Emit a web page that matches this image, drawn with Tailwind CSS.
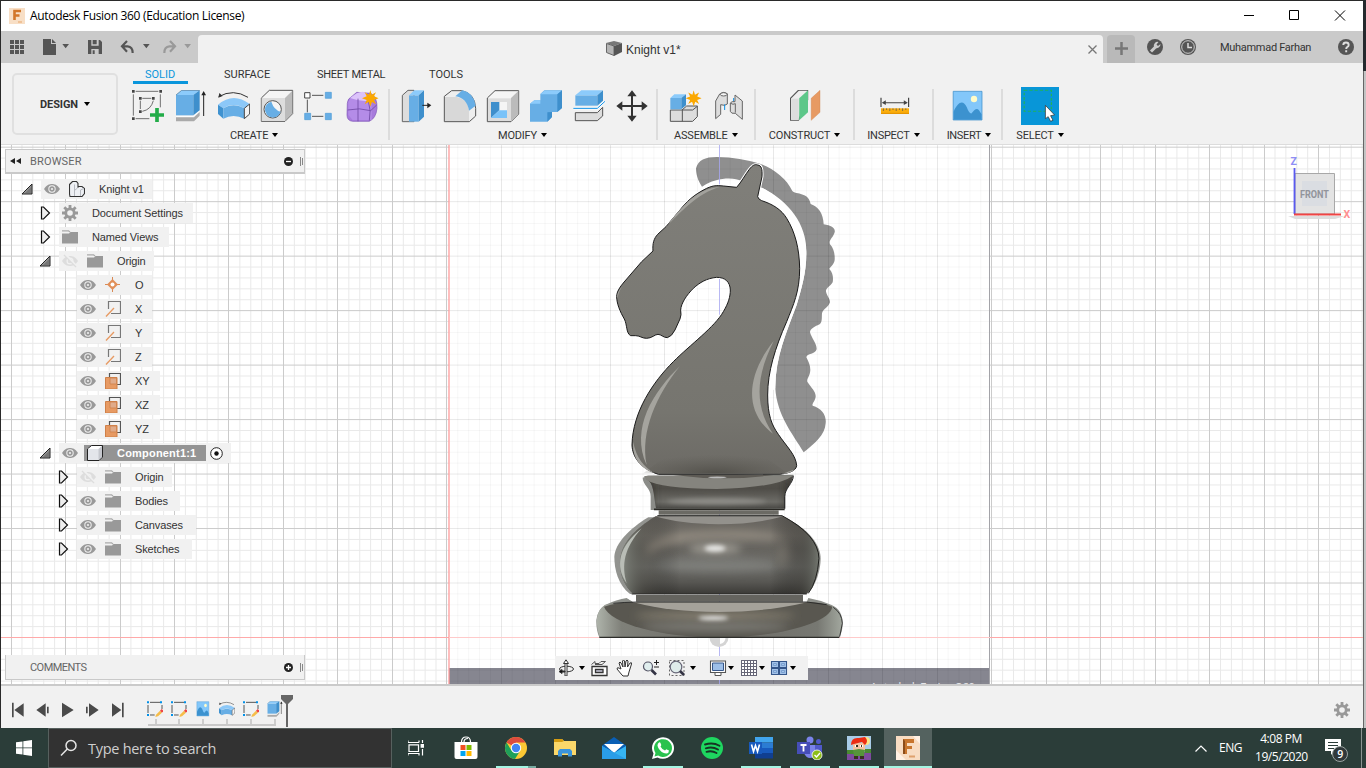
<!DOCTYPE html>
<html lang="en">
<head>
<meta charset="utf-8">
<title>Autodesk Fusion 360 (Education License)</title>
<script src="https://cdn.jsdelivr.net/npm/@tailwindcss/browser@4"></script>
</head>
<body class="h-[768px] w-[1366px] overflow-hidden bg-[#b9b9b9] font-['Liberation_Sans',sans-serif] text-[11px] text-[#333]">
<svg width="0" height="0" class="absolute">
  <defs>
    <symbol id="open" viewBox="0 0 12 12"><path d="M11 1V11H1Z" fill="#999" stroke="#222"/><path d="M10 4V10H4Z" fill="#777"/></symbol>
    <symbol id="shut" viewBox="0 0 12 14"><path d="M1.500 1H3.500L9.500 7L3.500 13H1.500Z" fill="#eee" stroke="#111" stroke-width="1.200"/></symbol>
    <symbol id="eye" viewBox="0 0 16 16"><path d="M0 8C3 3.500 5.500 3 8 3S13 3.500 16 8C13 12.500 10.500 13 8 13S3 12.500 0 8Z" fill="#999"/><circle cx="8" cy="8" r="3.700" fill="#f1f1f1"/><circle cx="8" cy="8" r="2.700" fill="#999"/><circle cx="8" cy="8" r="1.100" fill="#eee"/></symbol>
    <symbol id="noeye" viewBox="0 0 16 16"><path d="M0 8C3 3.500 5.500 3 8 3S13 3.500 16 8C13 12.500 10.500 13 8 13S3 12.500 0 8Z" fill="#ddd"/><circle cx="8" cy="8" r="3.500" fill="#f1f1f1"/><circle cx="8" cy="8" r="2.300" fill="#ddd"/><path d="M3 1L15 14" stroke="#f1f1f1" stroke-width="2.500"/><path d="M2 2L14 14" stroke="#ddd" stroke-width="1.300"/></symbol>
    <symbol id="folder" viewBox="0 0 16 16"><path d="M0 4.500H7L8.500 3H16V14.500H0Z" fill="#999"/><path d="M0 1.800H6.500L8 3" stroke="#aaa" fill="none" stroke-width="1.300"/></symbol>
    <symbol id="gear" viewBox="0 0 16 16"><path d="M8 0V16M0 8H16M2.300 2.300L13.700 13.700M13.700 2.300L2.300 13.700" stroke="#999" stroke-width="2.800"/><circle cx="8" cy="8" r="5.600" fill="#999"/><circle cx="8" cy="8" r="2.800" fill="#f1f1f1"/></symbol>
    <symbol id="axis" viewBox="0 0 16 16"><path d="M3.500 8V.5H15.500V12.500H6" fill="none" stroke="#777" stroke-width="1.200"/><path d="M1 15.500L9 7" stroke="#e79a63" stroke-width="1.300"/></symbol>
    <symbol id="plane" viewBox="0 0 16 16"><path d="M4.500 4V.5H15.500V11.500H12" fill="none" stroke="#555" stroke-width="1.200"/><path d="M.5 4.500H12V16H.5Z" fill="#e79a63" stroke="#cf8049"/><path d="M5 5H11.500V11H5Z" fill="#e0ab8a" stroke="#cf8049" stroke-width=".8"/></symbol>
    <symbol id="dn" viewBox="0 0 6 4"><path d="M0 0H6L3 4Z"/></symbol>
    <symbol id="tlsketch" viewBox="441 62 48 48"><path d="M450 66H480M444 74V98M486 74V86M450 104H464" stroke="#555" stroke-width="3"/><path d="M441 63h6v6h-6zM480 63h6v6h-6zM441 101h6v6h-6z" fill="#0090e8"/><path d="M468 103L480 91L486 97L474 108L466 110Z" fill="#f6bd49"/><path d="M480 91l5-5l5 5l-4 6z" fill="#e44"/></symbol>
    <symbol id="revolve" viewBox="654 270 96 96"><path d="M656 290Q700 265 744 292" fill="none" stroke="#333" stroke-width="3"/><path d="M655 293l3-14l10 9z" fill="#333"/><path d="M654 314Q700 275 749 312L733 325Q700 305 670 325Z" fill="#8cc8f8"/><path d="M654 314L670 325V356L654 342Z" fill="#3f92d0"/><path d="M670 325Q700 307 733 325V356Q700 340 670 356Z" fill="#67aee5"/><path d="M733 325L749 312V342L733 356Z" fill="#f4f4f4" stroke="#444" stroke-width="3"/></symbol>
    <symbol id="extr" viewBox="525 270 96 96"><path d="M528 352H582L599 336V347L582 364H528Z" fill="#aaa"/><path d="M528 349H580L598 333" fill="none" stroke="#fff" stroke-width="3"/><path d="M528 285H580V346H528Z" fill="#67aee5"/><path d="M528 285L545 271H599L580 285Z" fill="#8ccbfb"/><path d="M580 285L599 271V331L580 346Z" fill="#3e8fcc"/><path d="M528 285L545 271H599" stroke="#47708f" stroke-width="2" fill="none"/><path d="M611 348V278" stroke="#222" stroke-width="3"/><path d="M604 286L611 273L618 286Z" fill="#222"/></symbol>
    <symbol id="pic" viewBox="531 270 80 96"><path d="M534 274H606V360H534Z" fill="#83c7fa" stroke="#3c8fc9" stroke-width="2"/><ellipse cx="586" cy="297" rx="8" ry="10" fill="#fffbc8"/><path d="M535 335C548 300 560 302 568 322Q574 342 580 340C586 330 593 322 598 330L605 343V359H535Z" fill="#3c92cf"/></symbol>
    <symbol id="star" viewBox="0 0 50 50"><path d="M25 0L29 14L42 7L36 19L50 25L36 30L42 43L30 36L25 50L20 36L8 43L14 30L0 25L14 19L8 7L21 14Z" fill="#fba800"/></symbol>
  </defs>
</svg>

<div class="flex h-full flex-col border-t border-l border-[#2a2a2a]">
  <!-- title bar -->
  <header class="flex h-[30px] w-[1362px] shrink-0 items-center bg-white pl-2 font-['Open_Sans',sans-serif] text-black">
    <svg class="h-4 w-4" viewBox="0 0 16 16"><path fill="#f8dfc6" d="M0 0h16v16H0z"/><path d="M5.500 12V3H12M5.500 7.500H10.500" fill="none" stroke="#d2762a" stroke-width="2.600"/><path d="M9 14h4" stroke="#e7a56b"/></svg>
    <span class="ml-[5px] text-[12px] tracking-[-0.32px]">Autodesk Fusion 360 (Education License)</span>
    <svg class="mr-[17px] ml-auto h-3 w-[102px]" viewBox="0 0 102 12" fill="none" stroke="#000"><path d="M0 5.500H10M45.500 .5h9v9h-9zM91 .5l10 10M101 .5l-10 10"/></svg>
  </header>

  <!-- application bar -->
  <div class="flex h-8 w-[1362px] shrink-0 items-end bg-[#cacaca] font-[Roboto,sans-serif]">
    <div class="flex h-8 w-[197px] items-center pl-[9px]">
      <svg class="h-4 w-[182px]" viewBox="30 117 546 48" fill="#555"><path d="M30 120h12v12H30zM45 120h12v12H45zM60 120h12v12H60zM30 135h12v12H30zM45 135h12v12H45zM60 135h12v12H60zM30 150h12v12H30zM45 150h12v12H45zM60 150h12v12H60z"/><path d="M129 117H153V132H168V165H129ZM156 117L168 129H156Z"/><path d="M187 132H207L197 145ZM429 132H449L439 145Z"/><path d="M264 120H300L306 126V162H264Z"/><path d="M274 120H296V137H274ZM274 147H296V162H274Z" fill="#cacaca"/><path d="M278 120H290V133H278ZM278 151H284V162H278Z"/><path d="M381 123L366 139L381 155M368 139H383Q398 140 398 159" fill="none" stroke="#555" stroke-width="6.500"/><g fill="#999"><path d="M510 123L525 139L510 155M523 139H508Q493 140 493 159" fill="none" stroke="#999" stroke-width="6.500"/><path d="M553 132H573L563 145Z"/></g></svg>
    </div>
    <div class="flex h-7 w-[905px] items-center rounded-t bg-[#f1f1f1] pr-1">
      <div class="ml-[408px] flex items-center gap-1 font-['Liberation_Sans'] text-[12px]">
        <svg class="h-4 w-4" viewBox="0 0 16 16"><path d="M0 2L8 0L16 2L8 5Z" fill="#777"/><path d="M.5 2.500L8 5V14.500L.5 11.500Z" fill="#b5b5b5" stroke="#666"/><path d="M8 5L16 2V11L8 15Z" fill="#555"/></svg>
        <span class="pt-px">Knight v1*</span>
      </div>
      <svg class="mr-[2px] ml-auto h-[9px] w-[9px]" viewBox="0 0 9 9" stroke="#777" stroke-width="1.300"><path d="M.5.5l8 8M8.500.5l-8 8"/></svg>
    </div>
    <div class="ml-1 flex h-7 w-7 items-center justify-center rounded-t bg-[#b9b9b9]"><svg class="mb-[2px] h-[13px] w-[13px]" viewBox="0 0 13 13"><path d="M6.500 0V13M0 6.500H13" stroke="#777" stroke-width="2.500"/></svg></div>
    <div class="flex h-8 items-center">
      <svg class="ml-3 h-4 w-4" viewBox="0 0 16 16"><circle cx="8" cy="8" r="8" fill="#555"/><path d="M4 12.500L9 7.500" stroke="#ccc" stroke-width="3"/><path d="M11.500 3L9.500 5.500L11 7L13.500 5A3.800 3.800 0 0 1 7 8A3.800 3.800 0 0 1 11.500 3Z" fill="#ccc"/></svg>
      <svg class="ml-[17px] h-4 w-4" viewBox="0 0 16 16"><circle cx="8" cy="8" r="8" fill="#555"/><circle cx="8" cy="8" r="6.300" fill="none" stroke="#ccc"/><path d="M8 4V8.500H12" stroke="#ddd" stroke-width="1.500" fill="none"/></svg>
      <span class="ml-6 w-[118px] pt-[2px] tracking-[-0.3px] whitespace-nowrap">Muhammad Farhan</span>
      <svg class="h-4 w-4" viewBox="0 0 16 16"><circle cx="8" cy="8" r="8" fill="#555"/><path d="M5.300 6Q5.300 3.500 8 3.500T10.700 6Q10.700 7.300 9 8.300Q8.200 9 8.200 10M8.200 11.300V13.200" fill="none" stroke="#ddd" stroke-width="1.900"/></svg>
    </div>
  </div>

  <!-- ribbon -->
  <div class="flex h-[82px] w-[1362px] shrink-0 border-b border-[#dcdcdc] bg-[#f1f1f1] font-[Roboto,sans-serif]">
    <div class="mt-[10px] ml-[11px] flex h-[62px] w-[106px] items-center justify-center gap-[6px] rounded-[5px] border-2 border-[#e0e0e0] pt-[2px] text-[11px] font-bold tracking-[-0.1px]">DESIGN <svg class="mb-[2px] h-1 w-1.5"><use href="#dn"/></svg></div>
    <div class="flex flex-col">
      <nav class="flex h-[23px] pl-[15px]">
        <div class="flex h-[21px] w-[55px] justify-center border-b-[3px] border-[#0a96dc] pt-[5px] pr-px leading-[14px] text-[#0a96dc]">SOLID</div>
        <div class="ml-9 w-[46px] pt-1">SURFACE</div>
        <div class="ml-[47px] w-[68px] pt-1 tracking-[-0.28px] whitespace-nowrap">SHEET METAL</div>
        <div class="ml-11 pt-1">TOOLS</div>
      </nav>
      <div class="flex h-[54px] pt-[3px]">
        <section class="flex h-[51px] w-[272px] flex-col border-r-2 border-[#dcdcdc] pl-[14px]">
          <div class="flex gap-[11px] pt-px">
            <svg class="h-8 w-8 overflow-visible" viewBox="396 270 96 96"><path d="M407 274H475M400 283V347M481 283V322M407 356H448M427 295H454M421 302V327M460 302Q453 329 427 334" fill="none" stroke="#555" stroke-width="2.500"/><path d="M396 270h8v8h-8zM478 270h8v8h-8zM396 352h8v8h-8zM417 291h8v8h-8zM456 291h8v8h-8zM417 331h8v8h-8z" fill="#444"/><path d="M471 324V366M450 345H492" stroke="#22ac48" stroke-width="11"/></svg>
            <svg class="h-8 w-8"><use href="#extr"/></svg>
            <svg class="h-8 w-8"><use href="#revolve"/></svg>
            <svg class="h-8 w-8 overflow-visible" viewBox="783 270 96 96"><path d="M784 294L808 271H878V341L855 364H784Z" fill="#f5f5f5" stroke="#555" stroke-width="3"/><path d="M785 294H855V363H785Z" fill="#ddd"/><path d="M855 294L877 272V340L855 363Z" fill="#bbb"/><circle cx="818" cy="328" r="26" fill="#f5f5f5" stroke="#555" stroke-width="3"/><path d="M814 305Q822 330 842 335A24 24 0 1 1 814 305Z" fill="#67aee5"/></svg>
            <svg class="h-8 w-8" viewBox="912 270 96 96"><path d="M936 286H970M936 349H970M922 299V337" stroke="#555" stroke-width="3"/><path d="M914 278h16v16h-16z" fill="#fff" stroke="#444" stroke-width="3"/><path d="M976 277h18v18h-18zM914 340h18v19h-18zM976 340h18v19h-18z" fill="#67aee5" stroke="#4d9bd6" stroke-width="2"/></svg>
            <svg class="h-8 w-8 overflow-visible" viewBox="1041 270 96 96"><path d="M1042 310Q1042 296 1057 288L1070 277L1112 280Q1132 290 1131 325Q1128 355 1108 364H1058Q1041 362 1041 345Z" fill="#a77bdc" stroke="#7e54b8" stroke-width="2"/><path d="M1054 290Q1085 303 1115 284V360H1058L1045 345V305Z" fill="#b48ce8"/><path d="M1070 280Q1090 270 1100 280L1105 302Q1080 305 1050 294Z" fill="#dcc3fa"/><path d="M1043 330Q1078 322 1112 332L1130 315M1074 296V364M1105 302Q1114 332 1108 362" stroke="#6f48a5" stroke-width="2.500" fill="none"/><use href="#star" x="1086" y="270" width="50" height="50"/></svg>
          </div>
          <div class="mt-[6px] ml-[98px] flex items-center gap-1 tracking-[-0.2px]">CREATE <svg class="mb-[2px] h-1 w-1.5"><use href="#dn"/></svg></div>
        </section>
        <section class="flex h-[51px] w-[268px] flex-col border-r-2 border-[#dcdcdc] pl-3">
          <div class="flex gap-[11px] pt-px">
            <svg class="h-8 w-8 overflow-visible" viewBox="36 180 96 96"><path d="M37 196L54 181H72V275H37Z" fill="#ddd" stroke="#666" stroke-width="3"/><path d="M57 196H86V275H57Z" fill="#67aee5"/><path d="M57 196L73 181H101L86 196Z" fill="#8ccbfb"/><path d="M86 196L102 181V260L86 275Z" fill="#3e8fcc"/><path d="M97 226H116" stroke="#222" stroke-width="3"/><path d="M112 218L124 226L112 235Z" fill="#222"/></svg>
            <svg class="h-8 w-8 overflow-visible" viewBox="165 180 96 96"><path d="M163 199L185 182H215Q255 190 257 235V258L238 275H163Z" fill="#eee" stroke="#555" stroke-width="3"/><path d="M165 201H200Q235 208 237 242V273H165Z" fill="#d8d8d8"/><path d="M196 199L217 181Q250 187 257 227L237 242Q230 203 196 199Z" fill="#67aee5"/></svg>
            <svg class="h-8 w-8 overflow-visible" viewBox="294 180 96 96"><path d="M292 204L315 182H386V252L363 275H292Z" fill="#f5f5f5" stroke="#555" stroke-width="3"/><path d="M294 205H363V273H294Z" fill="#ddd"/><path d="M363 204L385 183V252L363 273Z" fill="#bbb"/><path d="M303 216H351V264H303Z" fill="#f5f5f5"/><path d="M303 216H328V241L303 264Z" fill="#3e8fcc"/><path d="M303 264L328 241H351V264Z" fill="#79c2f8"/></svg>
            <svg class="h-8 w-8 overflow-visible" viewBox="423 180 96 96"><path d="M420 221L433 211H451V192L463 181H516V234L502 246H486V261L472 275H420Z" fill="#67aee5"/><path d="M451 193L463 182H516L502 193ZM420 221L433 211H451V221Z" fill="#8ccbfb"/><path d="M502 193L516 181V234L502 246ZM472 247L486 246V261L472 275Z" fill="#3e8fcc"/></svg>
            <svg class="h-8 w-8 overflow-visible" viewBox="552 180 96 96"><path d="M556 248H622L638 232V258L622 272H556Z" fill="#ddd" stroke="#555" stroke-width="3"/><path d="M556 196H622V227H556Z" fill="#67aee5"/><path d="M556 196L574 181H638L622 196Z" fill="#8ccbfb"/><path d="M622 196L639 181V212L622 227Z" fill="#3e8fcc"/><path d="M550 235H622L645 214" fill="none" stroke="#fff" stroke-width="7"/><path d="M550 235H622L645 214" fill="none" stroke="#0a8ee5" stroke-width="3"/></svg>
            <svg class="h-8 w-8 overflow-visible" viewBox="681 180 96 96" fill="#333"><path d="M726 190V266M690 228H762" stroke="#333" stroke-width="6"/><path d="M712 199L726 181L740 199ZM712 257L726 275L740 257ZM697 214L679 228L697 242ZM755 214L773 228L755 242Z"/></svg>
          </div>
          <div class="mt-[6px] ml-[96px] flex items-center gap-1 tracking-[-0.2px]">MODIFY <svg class="mb-[2px] h-1 w-1.5"><use href="#dn"/></svg></div>
        </section>
        <section class="flex h-[51px] w-[98px] flex-col border-r-2 border-[#dcdcdc] pl-3">
          <div class="flex gap-[11px] pt-px">
            <svg class="h-8 w-8 overflow-visible" viewBox="840 180 96 96"><path d="M841 240H876L890 228H922V260L908 274H841Z" fill="#ddd" stroke="#555" stroke-width="3"/><path d="M877 240V274M877 240H908L922 229" stroke="#555" stroke-width="3" fill="none"/><path d="M841 204H874V238H841Z" fill="#67aee5"/><path d="M841 204L853 193H888L874 204Z" fill="#8ccbfb"/><path d="M874 204L888 193V226L874 238Z" fill="#3e8fcc"/><use href="#star" x="887" y="181" width="48" height="48"/></svg>
            <svg class="h-8 w-8 overflow-visible" viewBox="969 180 96 96" stroke="#666" stroke-width="3"><path d="M977 213L989 192Q1000 183 1012 191V222Q1005 229 992 224V253L977 266Z" fill="#ddd"/><ellipse cx="1001" cy="193" rx="10" ry="5" fill="#f5f5f5"/><path d="M1004 223V240M1031 204V222" stroke="#0a8ee5"/><path d="M1035 195L1057 213V268L1036 250Q1023 252 1021 244V219Q1025 213 1035 215Z" fill="#ddd"/><path d="M1022 220Q1029 225 1036 221V248" fill="none"/></svg>
          </div>
          <div class="mt-[6px] ml-1 flex items-center gap-1 tracking-[-0.2px]">ASSEMBLE <svg class="mb-[2px] h-1 w-1.5"><use href="#dn"/></svg></div>
        </section>
        <section class="flex h-[51px] w-[99px] flex-col items-center border-r-2 border-[#dcdcdc]">
          <svg class="mt-px ml-[3px] h-8 w-8 shrink-0" viewBox="125 270 80 96" preserveAspectRatio="none"><path d="M126 295L146 271H169V300L146 361H126Z" fill="#eee" stroke="#555" stroke-width="3"/><path d="M128 296H147V360H128Z" fill="#ddd"/><path d="M148 295L170 271V337L148 361Z" fill="#5dc789"/><path d="M178 295L200 271V337L178 361Z" fill="#e79a63" stroke="#d18048"/></svg>
          <div class="mt-[6px] flex items-center gap-1 tracking-[-0.2px]">CONSTRUCT <svg class="mb-[2px] h-1 w-1.5"><use href="#dn"/></svg></div>
        </section>
        <section class="flex h-[51px] w-[79px] flex-col items-center border-r-2 border-[#dcdcdc]">
          <svg class="mt-px ml-[2px] h-8 w-8 shrink-0" viewBox="346 270 80 96" preserveAspectRatio="none"><path d="M351 293V321M420 293V321M358 308H414" stroke="#444" stroke-width="3"/><path d="M353 308l10-7v14zM418 308l-10-7v14z" fill="#444"/><path d="M351 325H421V342H351Z" fill="#fbad0b"/><path d="M351 340H421" stroke="#e19100" stroke-width="3"/><path d="M357 325v8M365 325v5M373 325v8M381 325v5M389 325v8M397 325v5M405 325v8M413 325v5" stroke="#555" stroke-width="2"/></svg>
          <div class="mt-[6px] flex items-center gap-1 tracking-[-0.25px]">INSPECT <svg class="mb-[2px] h-1 w-1.5"><use href="#dn"/></svg></div>
        </section>
        <section class="flex h-[51px] w-[69px] flex-col items-center border-r-2 border-[#dcdcdc]">
          <svg class="mt-px h-8 w-8 shrink-0" viewBox="531 270 80 96" preserveAspectRatio="none"><path d="M534 274H606V360H534Z" fill="#83c7fa" stroke="#3c8fc9" stroke-width="2"/><ellipse cx="586" cy="297" rx="8" ry="10" fill="#fffbc8"/><path d="M535 335C548 300 560 302 568 322Q574 342 580 340C586 330 593 322 598 330L605 343V359H535Z" fill="#3c92cf"/></svg>
          <div class="mt-[6px] ml-[3px] flex items-center gap-1 tracking-[-0.3px]">INSERT <svg class="mb-[2px] h-1 w-1.5"><use href="#dn"/></svg></div>
        </section>
        <section class="flex h-[51px] w-[74px] flex-col items-center">
          <svg class="-mt-[2px] h-[38px] w-[38px] shrink-0" viewBox="704 261 95 114" preserveAspectRatio="none"><path d="M704 261H799V375H704Z" fill="#0896d8"/><path d="M712 271H780V334H712Z" fill="none" stroke="#21b35a" stroke-width="3" stroke-dasharray="8 5"/><path d="M765 316V356L772 350L778 364L784 361L778 347L788 345Z" fill="#fff" stroke="#333" stroke-width="2"/></svg>
          <div class="mt-[3px] flex items-center gap-1 tracking-[-0.2px]">SELECT <svg class="mb-[2px] h-1 w-1.5"><use href="#dn"/></svg></div>
        </section>
      </div>
    </div>
  </div>

  <!-- modelling viewport -->
  <main class="relative h-[539px] w-[1362px] shrink-0 overflow-hidden bg-white">
    <svg class="absolute top-0 -left-px h-[539px] w-[1363px]" viewBox="0 145 1363 539">
      <defs>
        <clipPath id="sheet"><path d="M449 145H990V684H449Z"/></clipPath>
        <linearGradient id="horse" x1="0" y1="0" x2="0" y2="1"><stop offset="0" stop-color="#807f7a"/><stop offset=".8" stop-color="#76756f"/><stop offset="1" stop-color="#6c6a65"/></linearGradient>
        <radialGradient id="shade" cx=".5" cy="1" r=".6"><stop offset="0" stop-color="#4c4a44" stop-opacity=".8"/><stop offset="1" stop-color="#5b5952" stop-opacity="0"/></radialGradient>
        <linearGradient id="ball" x1="0" y1="0" x2="0" y2="1"><stop offset="0" stop-color="#66635e"/><stop offset=".25" stop-color="#706d67"/><stop offset=".42" stop-color="#66645f"/><stop offset=".65" stop-color="#70706c"/><stop offset=".85" stop-color="#575652"/><stop offset="1" stop-color="#3b3a37"/></linearGradient>
        <linearGradient id="edge" x1="0" y1="0" x2="1" y2="0"><stop offset="0" stop-color="#858a82"/><stop offset=".13" stop-color="#474640" stop-opacity=".35"/><stop offset=".3" stop-color="#000" stop-opacity="0"/><stop offset=".75" stop-color="#000" stop-opacity="0"/><stop offset=".9" stop-color="#34332f" stop-opacity=".4"/><stop offset="1" stop-color="#777b73"/></linearGradient>
        <linearGradient id="neck" x1="0" y1="0" x2="0" y2="1"><stop offset="0" stop-color="#55534d"/><stop offset=".4" stop-color="#4f4d48"/><stop offset=".8" stop-color="#6d6c67"/><stop offset="1" stop-color="#4a4945"/></linearGradient>
        <linearGradient id="ring" x1="0" y1="0" x2="1" y2="0"><stop offset="0" stop-color="#aeb3aa"/><stop offset=".1" stop-color="#7f8079"/><stop offset=".5" stop-color="#6d6b65"/><stop offset=".9" stop-color="#777872"/><stop offset="1" stop-color="#a2a79e"/></linearGradient>
        <filter id="b1" x="-50%" y="-150%" width="200%" height="400%"><feGaussianBlur stdDeviation="13"/></filter>
        <filter id="b2" x="-50%" y="-150%" width="200%" height="400%"><feGaussianBlur stdDeviation="6"/></filter>
        <clipPath id="bulb"><path d="M228 228H607C680 265 717 310 717 355C715 410 695 450 678 462H160C130 435 118 400 120 360C125 310 160 270 228 228Z"/></clipPath>
        <clipPath id="collar"><path d="M200 107H638C636 135 613 145 613 172V205H228C220 160 222 130 200 118Z"/></clipPath>
        <clipPath id="foot"><path d="M72 500Q110 487 170 486H680Q725 487 757 500C750 550 590 592 415 592S90 550 72 500Z"/></clipPath>
      </defs>
      <g fill="none"><path id="minor" stroke="#e9e9e9"/><path id="major" stroke="#cbcbcb"/></g>
      <path d="M0 637.500H1363" stroke="#ffa9a9"/>
      <path d="M449 145H990V684H449Z" fill="#fff"/>
      <path d="M449 668H990V684H449Z" fill="#868690"/>
      <g transform="translate(590 145) scale(.33333)">
        <path d="M336 125C322 105 318 85 318 70C325 45 345 36 380 36C430 37 470 44 510 56C550 70 590 100 607 138C620 150 655 140 662 177C685 185 700 205 701 238C725 242 737 250 734 262C730 278 715 285 720 298C732 310 735 330 734 345C733 358 718 368 718 372C730 385 730 400 728 412C720 425 706 430 708 440C712 455 720 460 720 472C715 488 700 490 696 505C695 520 697 530 690 537C675 545 660 550 660 562C665 580 680 595 680 612C677 628 650 625 649 637C655 650 661 660 661 675C660 695 650 700 652 710C665 730 678 740 677 755C675 770 665 775 668 782C695 790 710 810 707 835C705 870 675 895 641 922C610 870 560 810 556 730C555 640 590 560 620 480C635 430 650 380 649 320C645 250 610 200 570 165C550 148 530 135 516 128L455 108C430 95 375 98 336 125Z" fill="#8f8f8f"/>
      </g>
      <g clip-path="url(#sheet)" fill="none"><path id="minor2" stroke="#000" stroke-opacity=".035"/><path id="major2" stroke="#000" stroke-opacity=".09"/></g>
      <path d="M719.500 145V684" stroke="#a6a6f0" stroke-opacity=".8"/>
      <path d="M449 145V684" stroke="#ff9c9c" stroke-width="1.300"/><path d="M989.500 145V684" stroke="#a3a3a8"/>
      <path d="M449 637.500H990" stroke="#ffcaca"/>
      <path d="M709.500 637.500A9.500 9.500 0 0 0 728.500 637.500Z" fill="#d4d4d4"/><path d="M720 638H725.500A6.500 6.500 0 0 1 720 644Z" fill="#fff"/>
      <g transform="translate(590 145) scale(.33333)">
        <path d="M205 988C150 970 127 935 126 900C128 800 190 710 250 650C300 600 375 545 400 500C415 475 421 455 421 435C420 410 405 397 380 397C350 400 330 412 310 430C290 450 273 475 272 495Q275 510 270 522L255 555Q245 575 232 578C220 578 213 568 204 568C195 568 185 580 170 580C155 580 150 572 137 572L122 572C108 565 112 540 103 522C90 500 80 475 80 455C80 440 90 425 105 408L155 350L189 318C187 295 192 280 203 268L228 245L270 195C290 170 310 150 350 130C370 121 380 121 400 123L440 127C455 110 465 90 478 73C488 60 495 57 503 60C515 62 517 72 516 95L503 155Q505 163 515 167C550 178 575 195 590 220C615 260 628 310 629 370C629 440 610 480 590 530C555 610 533 680 533 750C533 810 545 840 565 868C590 905 618 930 620 962C618 980 590 985 570 988Z" fill="none" stroke="#fff" stroke-width="9"/>
        <path d="M516 128C600 170 650 240 649 320C650 380 635 430 620 480C590 560 555 640 556 730L533 750L560 600L629 370L590 220L503 160Z" fill="#fff"/>
        <path d="M205 988C150 970 127 935 126 900C128 800 190 710 250 650C300 600 375 545 400 500C415 475 421 455 421 435C420 410 405 397 380 397C350 400 330 412 310 430C290 450 273 475 272 495Q275 510 270 522L255 555Q245 575 232 578C220 578 213 568 204 568C195 568 185 580 170 580C155 580 150 572 137 572L122 572C108 565 112 540 103 522C90 500 80 475 80 455C80 440 90 425 105 408L155 350L189 318C187 295 192 280 203 268L228 245L270 195C290 170 310 150 350 130C370 121 380 121 400 123L440 127C455 110 465 90 478 73C488 60 495 57 503 60C515 62 517 72 516 95L503 155Q505 163 515 167C550 178 575 195 590 220C615 260 628 310 629 370C629 440 610 480 590 530C555 610 533 680 533 750C533 810 545 840 565 868C590 905 618 930 620 962C618 980 590 985 570 988Z" fill="url(#horse)" stroke="#1a1a1a" stroke-width="3"/>
        <path d="M160 985Q380 800 590 985Z" fill="url(#shade)"/>
        <path d="M270 663C190 740 120 850 170 960C150 860 200 750 270 663Z" fill="#a5a49e"/>
        <path d="M551 588C470 690 460 800 549 866C490 780 500 690 551 588Z" fill="#a5a49e"/>
        <path d="M228 245C280 180 320 130 390 126C320 145 270 205 228 245ZM129 890C127 940 150 970 195 985C160 965 140 940 129 890ZM82 462C80 445 88 435 96 424C87 440 85 450 82 462ZM575 987L615 973Q605 985 575 987Z" fill="#a3a29d"/>
      </g>
      <g transform="translate(580 440) scale(.33333)">
        <!-- collar -->
        <path d="M188 113L205 107L640 104C640 130 615 140 616 170V206L212 210V170C213 145 188 135 188 113Z" fill="#8b8c88"/>
        <path d="M200 107H638C636 135 613 145 613 172V205H228C220 160 222 130 200 118Z" fill="url(#neck)"/>
        <g clip-path="url(#collar)"><ellipse cx="410" cy="184" rx="150" ry="9" fill="#8f8e89" filter="url(#b2)"/><path d="M205 120V210M632 120V210" stroke="#34332f" stroke-width="26" filter="url(#b1)"/></g>
        <path d="M192 108H638Q590 143 410 147Q240 146 200 120Z" fill="#85847e"/>
        <path d="M280 105H580Q430 125 280 105Z" fill="#5d5a54"/><ellipse cx="412" cy="112" rx="28" ry="2.500" fill="#bbb"/>
        <path d="M640 107C640 130 614 145 614 170V206" fill="none" stroke="#222" stroke-width="3"/>
        <path d="M222 208H614" stroke="#292824" stroke-width="5"/>
        <path d="M236 211H596V224H236Z" fill="#6b6a64"/>
        <!-- bulb -->
        <path d="M205 232H610C690 265 722 320 722 355C722 400 700 450 680 462H150C115 435 103 390 103 350C105 310 150 265 205 232Z" fill="#92938f"/>
        <path d="M228 228H607C680 265 717 310 717 355C715 410 695 450 678 462H160C130 435 118 400 120 360C125 310 160 270 228 228Z" fill="url(#ball)"/>
        <g clip-path="url(#bulb)">
          <path d="M200 320Q230 275 410 273Q580 270 630 300Q590 298 410 294Q260 300 200 345Z" fill="#948d82" filter="url(#b1)"/>
          <ellipse cx="410" cy="375" rx="180" ry="20" fill="#8c8d89" filter="url(#b1)" opacity=".5"/>
          <ellipse cx="610" cy="345" rx="22" ry="38" fill="#918c82" filter="url(#b1)" opacity=".6"/>
          <ellipse cx="405" cy="326" rx="80" ry="12" fill="#aaa79f" filter="url(#b1)"/>
          <ellipse cx="405" cy="325" rx="32" ry="10" fill="#e6e6e4" filter="url(#b2)"/>
          <path d="M120 228H720V462H120Z" fill="url(#edge)"/>
        </g>
        <path d="M225 229H610Q530 252 415 253Q300 252 225 229Z" fill="#93918c"/>
        <path d="M185 265C115 320 105 380 140 430C124 375 132 325 185 265Z" fill="#b9bdb6"/>
        <path d="M232 227H606Q715 285 717 355Q712 425 685 460" fill="none" stroke="#1d1d1b" stroke-width="3"/>
        <path d="M168 465H669V485H168Z" fill="#65645f"/><path d="M155 462H680" stroke="#2b2a27" stroke-width="3"/>
        <!-- base -->
        <path d="M75 495Q110 478 140 474L160 486H680L685 474Q720 480 755 495C778 505 788 525 788 550Q788 575 778 592H58Q48 570 49 540Q52 510 75 495Z" fill="#8e908b"/>
        <path d="M75 495Q110 487 160 486H680Q725 487 755 497C778 510 788 530 786 555Q785 575 776 592H60Q48 565 51 535Q55 507 75 495Z" fill="url(#ring)"/>
        <g clip-path="url(#foot)">
          <path d="M72 486H757V592H72Z" fill="#595750"/>
          <ellipse cx="405" cy="527" rx="240" ry="9" fill="#99917f" filter="url(#b1)"/>
          <ellipse cx="405" cy="560" rx="220" ry="12" fill="#82817b" filter="url(#b1)"/>
          <ellipse cx="400" cy="534" rx="45" ry="6" fill="#eee" filter="url(#b2)"/>
        </g>
        <path d="M160 487H682Q560 516 415 516Q270 516 160 487Z" fill="#a5a29a"/>
        <path d="M142 474L160 487H168V465ZM669 465V486L683 474Z" fill="#fff" opacity=".9"/>
        <path d="M58 592H778" stroke="#2d2d2a" stroke-width="4"/><path d="M100 490Q130 487 170 486H680L740 494M760 502Q786 520 787 550L779 590" fill="none" stroke="#222" stroke-width="2.500"/>
      </g>
      <!-- view cube -->
      <path d="M1288 216H1345L1335 219H1295Z" fill="#ddd"/>
      <path d="M1295 173.500H1334.500V214H1295Z" fill="#e3e3e3" stroke="#a8a8a8"/><path d="M1302 181h25v25h-25z" fill="#dadde2"/>
      <path d="M1294.500 168V214" stroke="#5a5af0" stroke-width="1.800"/><path d="M1294 214.500H1341" stroke="#f04444" stroke-width="1.800"/>
      <g font-family="Roboto" font-weight="700"><text x="1300" y="198" font-size="10.500" textLength="29" lengthAdjust="spacingAndGlyphs" fill="#92949b">FRONT</text><text x="1290.500" y="165" font-size="10.500" fill="#8e8ef5">Z</text><text x="1343.500" y="217.500" font-size="10.500" fill="#ff9090">X</text></g>
      <text x="870" y="691.500" font-family="Open Sans" font-size="12" fill="#e5e5ea" textLength="105">Autodesk Fusion 360</text>
    </svg>

    <aside class="absolute top-1 left-1 w-[300px]">
      <div class="flex h-[25px] items-center border border-b-2 border-[#c9c9c9] bg-[#f1f1f1] pl-1 font-[Roboto,sans-serif] text-[#666]">
        <svg class="h-[6px] w-[11px]" viewBox="0 0 11 6"><path d="M5 0V6L0 3ZM11 0V6L6 3Z" fill="#222"/></svg>
        <span class="ml-[9px] pt-[2px] tracking-[0.15px]">BROWSER</span>
        <svg class="mr-px ml-auto h-[9px] w-[19px]" viewBox="0 0 19 9"><circle cx="4.500" cy="4.500" r="4.500" fill="#222"/><path d="M2 4.500h5" stroke="#fff" stroke-width="1.300"/><path d="M16.500 0V9M18.500 1V8" stroke="#888"/></svg>
      </div>
      <div class="mt-[3px] flex flex-col tracking-[-0.12px] whitespace-nowrap">
        <div class="flex h-6 items-center pl-4"><svg class="mr-2 h-3 w-3"><use href="#open"/></svg><div class="flex h-5 w-[111px] items-center bg-[#f1f1f1] pl-[3px]"><svg class="h-4 w-4"><use href="#eye"/></svg><svg class="ml-[9px] mr-[14px] h-4 w-4" viewBox="0 0 16 16"><path d="M.5 3.500L3.500.5H7.500L9 2.500V6L10 5.500H13L15.500 7.500V12.500L13 15.500H1L.5 13Z" fill="#eef0f4" stroke="#333" stroke-width="1.100"/><path d="M5.500 15V3.500M5.500 9.500L8.500 7M11.500 15V9L15 7.500" stroke="#b7bac0" fill="none"/></svg>Knight v1</div></div>
        <div class="flex h-6 items-center pl-[35px]"><svg class="mr-[7px] h-[14px] w-3"><use href="#shut"/></svg><div class="flex h-5 w-[134px] items-center bg-[#f1f1f1] pl-[3px]"><svg class="mr-[14px] h-4 w-4"><use href="#gear"/></svg>Document Settings</div></div>
        <div class="flex h-6 items-center pl-[35px]"><svg class="mr-[7px] h-[14px] w-3"><use href="#shut"/></svg><div class="flex h-5 w-[110px] items-center bg-[#f1f1f1] pl-[3px]"><svg class="mr-[14px] h-4 w-4"><use href="#folder"/></svg>Named Views</div></div>
        <div class="flex h-6 items-center pl-[34px]"><svg class="mr-2 h-3 w-3"><use href="#open"/></svg><div class="flex h-5 w-[95px] items-center bg-[#f1f1f1] pl-[3px]"><svg class="h-4 w-4"><use href="#noeye"/></svg><svg class="ml-[9px] mr-[14px] h-4 w-4"><use href="#folder"/></svg>Origin</div></div>
        <div class="flex h-6 items-center pl-[72px]"><div class="flex h-5 w-[75px] items-center bg-[#f1f1f1] pl-[3px]"><svg class="h-4 w-4"><use href="#eye"/></svg><svg class="ml-[9px] mr-[14px] h-4 w-4" viewBox="0 0 16 16"><path d="M7.500 0V15M0 7.500H15" stroke="#d88a55"/><path d="M7.500 2L13 7.500L7.500 13L2 7.500Z" fill="#e18f58"/><circle cx="7.500" cy="7.500" r="2" fill="#fff"/></svg>O</div></div>
        <div class="flex h-6 items-center pl-[72px]"><div class="flex h-5 w-[75px] items-center bg-[#f1f1f1] pl-[3px]"><svg class="h-4 w-4"><use href="#eye"/></svg><svg class="ml-[9px] mr-[14px] h-4 w-4"><use href="#axis"/></svg>X</div></div>
        <div class="flex h-6 items-center pl-[72px]"><div class="flex h-5 w-[75px] items-center bg-[#f1f1f1] pl-[3px]"><svg class="h-4 w-4"><use href="#eye"/></svg><svg class="ml-[9px] mr-[14px] h-4 w-4"><use href="#axis"/></svg>Y</div></div>
        <div class="flex h-6 items-center pl-[72px]"><div class="flex h-5 w-[75px] items-center bg-[#f1f1f1] pl-[3px]"><svg class="h-4 w-4"><use href="#eye"/></svg><svg class="ml-[9px] mr-[14px] h-4 w-4"><use href="#axis"/></svg>Z</div></div>
        <div class="flex h-6 items-center pl-[72px]"><div class="flex h-5 w-[83px] items-center bg-[#f1f1f1] pl-[3px]"><svg class="h-4 w-4"><use href="#eye"/></svg><svg class="ml-[9px] mr-[14px] h-4 w-4"><use href="#plane"/></svg>XY</div></div>
        <div class="flex h-6 items-center pl-[72px]"><div class="flex h-5 w-[83px] items-center bg-[#f1f1f1] pl-[3px]"><svg class="h-4 w-4"><use href="#eye"/></svg><svg class="ml-[9px] mr-[14px] h-4 w-4"><use href="#plane"/></svg>XZ</div></div>
        <div class="flex h-6 items-center pl-[72px]"><div class="flex h-5 w-[83px] items-center bg-[#f1f1f1] pl-[3px]"><svg class="h-4 w-4"><use href="#eye"/></svg><svg class="ml-[9px] mr-[14px] h-4 w-4"><use href="#plane"/></svg>YZ</div></div>
        <div class="flex h-6 items-center pl-[34px]"><svg class="mr-2 h-3 w-3"><use href="#open"/></svg><div class="flex h-5 w-[172px] items-center bg-[#f1f1f1] pl-[3px]"><svg class="h-4 w-4"><use href="#eye"/></svg><div class="ml-[6px] flex h-4 w-[122px] items-center bg-[#949494] pl-[3px] font-bold tracking-[0.2px] text-white"><svg class="mr-[14px] h-4 w-4" viewBox="0 0 16 16"><path d="M.5 4L4.500.5H15.500V12L12 15.500H.5Z" fill="#e3e5ea" stroke="#222"/><path d="M1 4L5 1H15L11.500 4Z" fill="#fff"/><path d="M11.500 4L15 1V12L11.500 15Z" fill="#c5c7cd"/></svg>Component1:1</div><svg class="ml-1 h-[13px] w-[13px]" viewBox="0 0 13 13"><circle cx="6.500" cy="6.500" r="5.800" fill="#fff" stroke="#222"/><circle cx="6.500" cy="6.500" r="2.200" fill="#111"/></svg></div></div>
        <div class="flex h-6 items-center pl-[53px]"><svg class="mr-[7px] h-[14px] w-3"><use href="#shut"/></svg><div class="flex h-5 w-[95px] items-center bg-[#f1f1f1] pl-[3px]"><svg class="h-4 w-4"><use href="#noeye"/></svg><svg class="ml-[9px] mr-[14px] h-4 w-4"><use href="#folder"/></svg>Origin</div></div>
        <div class="flex h-6 items-center pl-[53px]"><svg class="mr-[7px] h-[14px] w-3"><use href="#shut"/></svg><div class="flex h-5 w-[103px] items-center bg-[#f1f1f1] pl-[3px]"><svg class="h-4 w-4"><use href="#eye"/></svg><svg class="ml-[9px] mr-[14px] h-4 w-4"><use href="#folder"/></svg>Bodies</div></div>
        <div class="flex h-6 items-center pl-[53px]"><svg class="mr-[7px] h-[14px] w-3"><use href="#shut"/></svg><div class="flex h-5 w-[119px] items-center bg-[#f1f1f1] pl-[3px]"><svg class="h-4 w-4"><use href="#eye"/></svg><svg class="ml-[9px] mr-[14px] h-4 w-4"><use href="#folder"/></svg>Canvases</div></div>
        <div class="flex h-6 items-center pl-[53px]"><svg class="mr-[7px] h-[14px] w-3"><use href="#shut"/></svg><div class="flex h-5 w-[115px] items-center bg-[#f1f1f1] pl-[3px]"><svg class="h-4 w-4"><use href="#eye"/></svg><svg class="ml-[9px] mr-[14px] h-4 w-4"><use href="#folder"/></svg>Sketches</div></div>
      </div>
    </aside>

    <div class="absolute top-[510px] left-1 flex h-[25px] w-[300px] items-center border border-t-0 border-[#c9c9c9] bg-[#f1f1f1] pl-6 font-[Roboto,sans-serif] text-[#666]">
      <span class="pt-[2px] tracking-[-0.55px]">COMMENTS</span>
      <svg class="mr-px ml-auto h-[9px] w-[19px]" viewBox="0 0 19 9"><circle cx="4.500" cy="4.500" r="4.500" fill="#222"/><path d="M2 4.500h5M4.500 2v5" stroke="#fff" stroke-width="1.300"/><path d="M16.500 0V9M18.500 1V8" stroke="#888"/></svg>
    </div>

    <div class="absolute top-[511px] left-[554px] flex h-6 w-[253px] items-center bg-[#f1f1f1] pl-[2px] text-[#222]">
      <svg class="h-[18px] w-[18px]" viewBox="0 0 18 18" fill="none" stroke="#333"><ellipse cx="9.500" cy="10" rx="7" ry="2.800"/><path d="M9 3V17" stroke-width="3"/><path d="M9 3V16.500" stroke="#fff"/><path d="M6.500 4.500L9 .8L11.500 4.500Z" fill="#fff"/><path d="M2 12.500L5 10.500V12H8V13H5V14.500Z" fill="#111"/></svg>
      <svg class="ml-1 h-1 w-1.5"><use href="#dn"/></svg>
      <svg class="ml-[5px] h-[18px] w-[18px]" viewBox="0 0 18 18" fill="none" stroke="#333" stroke-width="1.300"><path d="M2 7.500H17V16.500H2Z" fill="#fff"/><path d="M5.500 10.500H13V13.500H5.500Z" fill="#ccd"/><path d="M1.500 5.500L5 2.500V4.500H9L11 2.500H15.500L12 5.500H5" stroke="#555" stroke-width="1"/></svg>
      <svg class="ml-2 h-[18px] w-[18px]" viewBox="0 0 18 18"><path d="M6 16L1 10Q1 8 3 9L5 10L3 4Q4 2 5 4L7 8L6.500 2Q7.500 0 8.500 2L9 8L10 2Q11 0 12 2L11.500 8L14 4Q16 3 15.500 5L13 13L12 17H7Z" fill="#fff" stroke="#333"/></svg>
      <svg class="ml-2 h-[18px] w-[18px]" viewBox="0 0 18 18"><circle cx="6" cy="7.500" r="4.500" fill="#e0eeee" stroke="#556" stroke-width="1.200"/><path d="M9.500 11L14 15.500" stroke="#334" stroke-width="2.600"/><path d="M14.500 1V6M12 3.500H17M12 8H17" stroke="#222"/></svg>
      <svg class="ml-2 h-[18px] w-[18px]" viewBox="0 0 18 18"><path d="M1.500 1.500H16V16.500H1.500Z" fill="none" stroke="#666" stroke-dasharray="2 2"/><circle cx="8" cy="8" r="5.800" fill="#dfeceb" stroke="#667" stroke-width="1.200"/><path d="M12 12L16 16" stroke="#334" stroke-width="2.600"/></svg>
      <svg class="ml-1 h-1 w-1.5"><use href="#dn"/></svg>
      <svg class="ml-[13px] h-[18px] w-[18px]" viewBox="0 0 18 18"><path d="M1.500 2H16.500V13.500H1.500Z" fill="#fff" stroke="#555" stroke-width="1.100"/><path d="M3.500 4H14.500V11.500H3.500Z" fill="#9dbfe8" stroke="#35568a"/><path d="M6 14V16.500H12V14" fill="#fff" stroke="#555"/></svg>
      <svg class="ml-px h-1 w-1.5"><use href="#dn"/></svg>
      <svg class="ml-[6px] h-[18px] w-[18px]" viewBox="0 0 18 18"><path d="M1 1H17V17H1Z" fill="#fff"/><path d="M1.500 1V17M4.500 1V17M7.500 1V17M10.500 1V17M13.500 1V17M16.500 1V17M1 1.500H17M1 4.500H17M1 7.500H17M1 10.500H17M1 13.500H17M1 16.500H17" stroke="#667"/></svg>
      <svg class="ml-px h-1 w-1.5"><use href="#dn"/></svg>
      <svg class="ml-[5px] h-[18px] w-[18px]" viewBox="0 0 18 18"><path d="M1.500 2.500h7v6h-7zM9.500 2.500h7v6h-7zM1.500 9.500h7v6h-7zM9.500 9.500h7v6h-7z" fill="#a5c4ea" stroke="#35568a" stroke-width="1.100"/><path d="M3.500 4.500h3v2h-3zM11.500 4.500h3v2h-3zM3.500 11.500h3v2h-3zM11.500 11.500h3v2h-3z" fill="none" stroke="#6f97c9" stroke-width=".8"/></svg>
      <svg class="ml-[2px] h-1 w-1.5"><use href="#dn"/></svg>
    </div>
  </main>

  <!-- timeline -->
  <div class="flex h-11 w-[1362px] shrink-0 border-t-2 border-[#cacaca] bg-[#f1f1f1] pl-[10px]">
    <svg class="mt-[15px] h-[18px] w-[116px]" viewBox="33 63 348 54" fill="#4a4a4a"><path d="M36 68h5v44h-5zM71 70V110L43 90ZM137 70V110L109 90ZM141 80h5v20h-5zM186 68V112L221 90ZM258 80h5v20h-5zM267 70V110L296 90ZM336 70V110L364 90ZM366 68h5v44h-5z"/></svg>
    <div class="mt-[15px] ml-5 w-[150px]">
      <div class="flex gap-2">
        <svg class="h-4 w-4 overflow-visible"><use href="#tlsketch"/></svg>
        <svg class="h-4 w-4 overflow-visible"><use href="#tlsketch"/></svg>
        <svg class="h-4 w-4"><use href="#pic"/></svg>
        <svg class="h-4 w-4"><use href="#revolve"/></svg>
        <svg class="h-4 w-4 overflow-visible"><use href="#tlsketch"/></svg>
        <svg class="h-4 w-4"><use href="#extr"/></svg>
      </div>
      <svg class="mt-[2px] h-[8px] w-[130px]" viewBox="0 0 130 8"><path d="M1 6H129M9 0V6M32 0V6M56 0V6M80 0V6M104 0V6M128 0V6" stroke="#c9c9c9" stroke-width="1.800"/></svg>
    </div>
    <svg class="mt-[9px] -ml-4 h-[33px] w-3" viewBox="0 0 12 33"><path d="M0 0H12V4L7 9V32H5V9L0 4Z" fill="#666"/></svg>
    <svg class="mt-4 mr-[13px] ml-auto h-4 w-4"><use href="#gear"/></svg>
  </div>
</div>

<!-- taskbar -->
<footer class="absolute top-[728px] left-0 flex h-10 w-[1366px] bg-[#2b3d39] font-['Open_Sans',sans-serif] text-white">
  <div class="flex w-12 items-center justify-center"><svg class="h-4 w-4" viewBox="0 0 16 16" fill="#fff"><path d="M0 2.300L6.500 1.400V7.500H0ZM7.300 1.300L16 0V7.500H7.300ZM0 8.300H6.500V14.600L0 13.700ZM7.300 8.300H16V16L7.300 14.700Z"/></svg></div>
  <div class="flex w-[344px] items-center border border-[#57605e] bg-[#323232] pl-[11px]">
    <svg class="h-[18px] w-[18px]" viewBox="0 0 18 18" fill="none" stroke="#e5e5e5" stroke-width="1.500"><circle cx="11" cy="6.500" r="5"/><path d="M7.300 10L1 16.500"/></svg>
    <span class="ml-[10px] pt-px text-[14.5px] tracking-[-0.28px] text-[#cfcfcf]">Type here to search</span>
  </div>
  <div class="flex w-12 items-center justify-center"><svg class="h-4 w-4" viewBox="0 0 16 16" fill="none" stroke="#fff" stroke-width="1.200"><path d="M0 2.500V.5M0 2.500H11M11 .5V2.500M1 4.800H10.500V11.500H1ZM0 15.500V13.500H11V15.500M14.500 0V3M14.500 9V15.500"/><path d="M13.200 4.500h2.600v2.600h-2.600z" fill="#fff"/></svg></div>
  <div class="ml-[2px] flex gap-px">
    <div class="flex w-12 items-center justify-center"><svg class="h-6 w-6" viewBox="0 0 24 24"><path d="M.5 6H23.500V21Q23.500 23 21.500 23H2.500Q.5 23 .5 21Z" fill="#fff"/><path d="M7.500 6Q7.500 1 12 1T16.500 6M10 6Q10 2.500 14 2.500" fill="none" stroke="#fff" stroke-width="1.200"/><path fill="#f25022" d="M6.500 9h5v5h-5z"/><path fill="#7fba00" d="M12.500 9h5v5h-5z"/><path fill="#00a4ef" d="M6.500 15h5v5h-5z"/><path fill="#ffb900" d="M12.500 15h5v5h-5z"/></svg></div>
    <div class="ml-px flex w-12 flex-col items-center pt-[9px]"><svg class="h-[22px] w-[22px]" viewBox="0 0 22 22"><circle cx="11" cy="11" r="11" fill="#fcc934"/><path d="M11 11L1.500 5.500A11 11 0 0 1 20.500 5.500H11Z" fill="#dd4c3e"/><path d="M1.500 5.500A11 11 0 0 0 10 22L15 14L11 11L6.500 13.500Z" fill="#1fa05a"/><circle cx="11" cy="11" r="5.200" fill="#fff"/><circle cx="11" cy="11" r="4.200" fill="#4285f4"/></svg><div class="mt-[7px] h-[2px] w-10 border-r-8 border-[#76aaa0] bg-[#a4f5e2]"></div></div>
    <div class="flex w-12 items-center justify-center"><svg class="h-5 w-[22px]" viewBox="0 0 22 20"><path d="M0 1H8L10 3H22V17H0Z" fill="#fbd86a"/><path d="M0 1H8L10 3L8 4H0Z" fill="#d69d12"/><path d="M4 18.500V13L6 11H16L18 13V18.500H14V15.500H8V18.500Z" fill="#3a94dc"/></svg></div>
    <div class="flex w-12 items-center justify-center"><svg class="h-6 w-6" viewBox="0 0 24 24"><path d="M0 9.500L12 1L24 9.500V23H0Z" fill="#0a5fb5"/><path d="M2 8H22L12 17Z" fill="#fff"/><path d="M0 10L12 17L24 10V23H0Z" fill="#36b5f2"/><path d="M0 10L24 23H0Z" fill="#2a9de8"/></svg></div>
    <div class="flex w-12 flex-col items-center pt-[9px]"><svg class="h-[22px] w-[22px]" viewBox="0 0 22 22"><path d="M0 22L1.500 16.500A11 10.800 0 1 1 5.500 20.400Z" fill="#fff"/><path d="M2.500 19.500L3.500 16A9 8.900 0 1 1 6.200 18.600Z" fill="#29c24e"/><path d="M7 5.500Q8 5 8.500 6L9.300 8Q9 9 8.500 9.500Q10 12.500 13 13.500L14.300 12.200L17 13.500Q17 16 14.500 16.500C10 16.500 6 12 5.500 8.500Q5.500 6.500 7 5.500Z" fill="#fff"/></svg><div class="mt-[7px] h-[2px] w-10 bg-[#a4f5e2]"></div></div>
    <div class="flex w-12 items-center justify-center"><svg class="h-[22px] w-[22px]" viewBox="0 0 22 22"><circle cx="11" cy="11" r="11" fill="#1ed760"/><path d="M4 7.500Q12 5 18.500 8.800M4.800 11.300Q11.500 9.300 17 12.500M5.500 14.800Q11 13.300 15.500 16" fill="none" stroke="#173524" stroke-width="1.900" stroke-linecap="round"/></svg></div>
    <div class="flex w-12 flex-col items-center pt-2"><svg class="h-6 w-6" viewBox="0 0 24 24"><path d="M6 1H24V6.500H6Z" fill="#41a5ee"/><path d="M6 6.500H24V12H6Z" fill="#2b7cd3"/><path d="M6 12H24V17H6Z" fill="#185abd"/><path d="M6 17H24V22.500H6Z" fill="#103f91"/><path d="M0 6H13V18H0Z" fill="#185abd"/><path d="M2.500 8.500L4.500 15.500L6.500 9.500L8.500 15.500L10.500 8.500" fill="none" stroke="#fff" stroke-width="1.600"/></svg><div class="mt-[6px] h-[2px] w-10 bg-[#a4f5e2]"></div></div>
    <div class="flex w-12 flex-col items-center pt-2"><svg class="h-6 w-[26px]" viewBox="0 0 26 24"><circle cx="13" cy="4" r="3.500" fill="#7b83eb"/><circle cx="21.500" cy="5.500" r="2.500" fill="#5059c9"/><path d="M16 9H25V17Q24 20 20 20Z" fill="#5059c9"/><path d="M7 9H18V18Q17 22 13 22T7 17Z" fill="#7b83eb"/><path d="M0 6H13V18H0Z" fill="#464eb8"/><path d="M3.500 9H9.500M6.500 9V15.500" stroke="#fff" stroke-width="1.800"/><circle cx="20" cy="19" r="5" fill="#8cbd18" stroke="#fff" stroke-width=".8"/><path d="M17.500 19L19.500 21L23 17" fill="none" stroke="#fff" stroke-width="1.400"/></svg><div class="mt-[6px] h-[2px] w-10 bg-[#a4f5e2]"></div></div>
    <div class="flex w-12 flex-col items-center pt-2"><svg class="h-6 w-6" viewBox="0 0 24 24"><path d="M0 0H24V24H0Z" fill="#a9cce8"/><circle cx="19" cy="5" r="4" fill="#f8e58a"/><path d="M0 16H24V24H0Z" fill="#7d4b9e"/><path d="M0 14H7V18H0ZM18 13H24V17H18Z" fill="#498a32"/><path d="M6 7H18V14H6Z" fill="#f5c3a2"/><path d="M4 9Q4 1 12 2L18 1Q22 5 18 9L15 6L7 8Z" fill="#ed2c13"/><path d="M8 9h3v2H8zM13 9h3v2h-3z" fill="#fff"/><path d="M6 14L12 13L18 14L17 20H7Z" fill="#56953b"/><path d="M9 9h2v2H9zM14 9h1v2h-1zM7 20h4v3H7zM13 20h4v3h-4z" fill="#383020"/></svg><div class="mt-[6px] h-[2px] w-10 bg-[#a4f5e2]"></div></div>
    <div class="flex w-12 flex-col items-center bg-[#54625f] pt-2"><svg class="h-6 w-6" viewBox="0 0 24 24"><path d="M0 0H24V24H0Z" fill="#f8dcc2"/><path d="M0 14L10 24H0ZM24 0L17 0L24 8Z" fill="#fff0e3"/><path d="M7 18V3H18V7H11V10H16V13H11V18Z" fill="#c8752d"/><path d="M7 18V3L9 5V18Z" fill="#8c4c19"/><path d="M13 20.500h6" stroke="#dfa16d" stroke-width="2"/></svg><div class="mt-[6px] h-[2px] w-12 bg-[#a4f5e2]"></div></div>
  </div>
  <div class="ml-auto flex items-center pr-[4px] text-[12px] tracking-[-0.45px]">
    <svg class="h-[7px] w-3" viewBox="0 0 12 7"><path d="M.5 6.500L6 1L11.500 6.500" fill="none" stroke="#fff" stroke-width="1.200"/></svg>
    <span class="ml-3 w-[24px]">ENG</span>
    <div class="ml-3 w-[52px] text-center leading-[18px] whitespace-nowrap">4:08 PM<br>19/5/2020</div>
    <svg class="ml-[17px] h-7 w-6" viewBox="0 0 24 28"><path d="M1 5H17V17H10L7 21V17H1Z" fill="#fff"/><path d="M4 8.500H14M4 11.500H14M4 14.500H10" stroke="#2b3d39"/><circle cx="16" cy="20" r="7.500" fill="#30383a" stroke="#9aa3a1"/><text x="16" y="24" font-size="10.500" font-family="Open Sans" font-weight="600" text-anchor="middle" fill="#fff">9</text></svg>
    <div class="ml-[13px] h-10 w-px bg-[#8a9492]"></div>
  </div>
</footer>
<div class="absolute top-0 left-[1363px] flex h-[728px] w-[3px] flex-col"><div class="h-[71px] bg-[#252a2e]"></div><div class="flex-1 border-l border-[#666] bg-[#c4c4c4]"></div></div>

<script>
  // Construction grid: origin at (719.3, 637.5), major spacing 54.48 px with five subdivisions
  const ox = 719.3, oy = 637.5, step = 54.48 / 5;
  let major = '', minor = '';
  for (let i = -66; i < 62; i++) {
    const x = ox + i * step;
    if (x < 0 || x > 1363 || i === 0) continue;
    if (i % 5 === 0) major += `M${Math.floor(x) + .5} 145V684`; else minor += `M${x.toFixed(2)} 145V684`;
  }
  for (let i = -46; i < 5; i++) {
    const y = oy + i * step;
    if (y < 145) continue;
    if (i % 5 === 0) { if (i) major += `M0 ${y.toFixed(2)}H1363`; } else minor += `M0 ${y.toFixed(2)}H1363`;
  }
  for (const s of ['', '2']) {
    document.getElementById('major' + s).setAttribute('d', major);
    document.getElementById('minor' + s).setAttribute('d', minor);
  }
</script>
</body>
</html>
